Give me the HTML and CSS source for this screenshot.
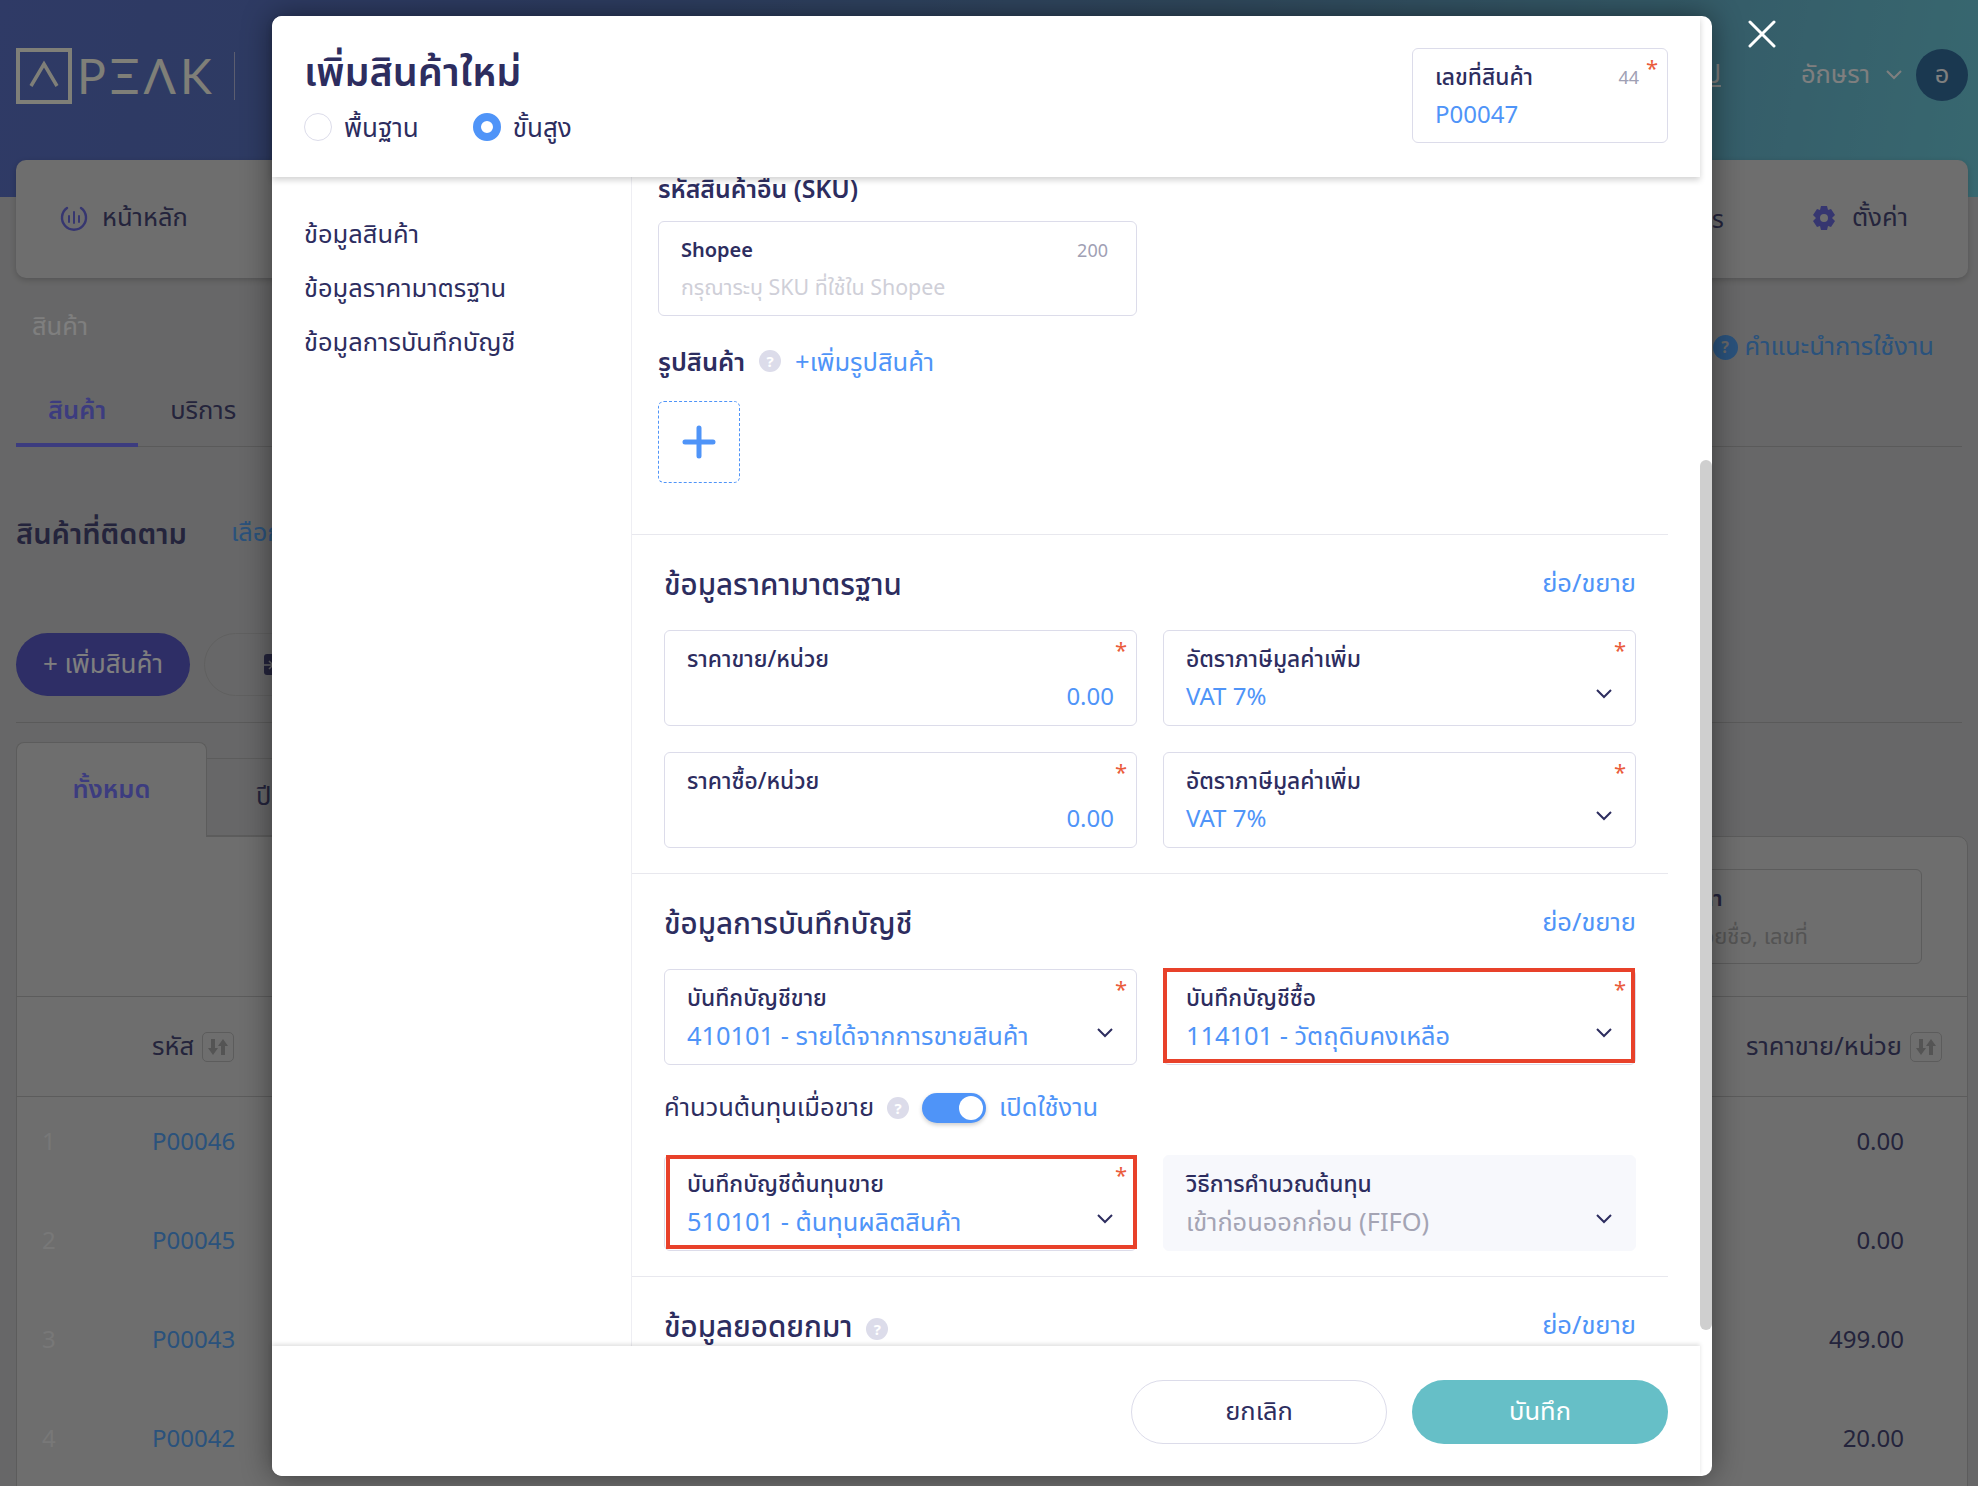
FILE: index.html
```html
<!DOCTYPE html>
<html lang="th">
<head>
    <meta charset="UTF-8">
    <title>PEAK - เพิ่มสินค้าใหม่</title>
    <link rel="stylesheet" href="styles.css">
</head>
<body>
    <!-- Page behind the dialog -->
    <div class="page">
        <header class="topbar">
            <div class="logo">
                <svg width="56" height="56" viewBox="0 0 56 56" fill="none" stroke="#fffff0" stroke-width="4"><rect x="2" y="2" width="52" height="52"/><path d="M15 38 L28 16 L41 38" stroke-width="3.5"/></svg>
                <span class="logo-text">PΞΛK</span>
                <span class="logo-line"></span>
            </div>
            <div class="topbar-right">
                <span class="top-link">ป</span>
                <span class="user-name">อักษรา</span>
                <svg class="user-caret" width="20" height="12" viewBox="0 0 20 12" fill="none" stroke="#fff" stroke-width="2"><path d="M3 2 L10 9 L17 2"/></svg>
                <span class="avatar">อ</span>
            </div>
        </header>

        <nav class="mainnav">
            <div class="nav-item">
                <svg width="28" height="28" viewBox="0 0 28 28" fill="none" stroke="#6c6ce0" stroke-width="2.4" stroke-linecap="round"><path d="M7 4 A12 12 0 1 0 21 4"/><path d="M9 12 V18 M14 8 V19 M19 12 V18" stroke-width="2"/></svg>
                <span>หน้าหลัก</span>
            </div>
            <div class="nav-right">
                <span class="nav-cut">Apps</span>
                <div class="nav-item">
                    <svg width="24" height="26" viewBox="0 0 24 26"><path fill="#6c6ce0" fill-rule="evenodd" d="M9 1h6l1 4 3-1 4 6-3 3 3 3-4 6-3-1-1 4H9l-1-4-3 1-4-6 3-3-3-3 4-6 3 1zM12 9a4 4 0 1 0 0 8 4 4 0 0 0 0-8z"/></svg>
                    <span>ตั้งค่า</span>
                </div>
            </div>
        </nav>

        <div class="crumbs">
            <span class="crumb">สินค้า</span>
            <span class="help-link"><i class="help-dot">?</i>คำแนะนำการใช้งาน</span>
        </div>

        <div class="subtabs">
            <span class="subtab active">สินค้า</span>
            <span class="subtab">บริการ</span>
        </div>

        <div class="follow">
            <h2>สินค้าที่ติดตาม</h2>
            <span class="follow-link">เลือก</span>
        </div>

        <div class="actions">
            <span class="btn-add">+ เพิ่มสินค้า</span>
            <span class="btn-ghost">
                <svg width="30" height="22" viewBox="0 0 30 22"><rect x="5" y="0" width="25" height="21" rx="3" fill="#484878"/><path d="M0 11 H14 M10 7 L14 11 L10 15" fill="none" stroke="#cfcfd0" stroke-width="1.5"/></svg>
            </span>
        </div>

        <div class="doc-tabs">
            <span class="doc-tab active">ทั้งหมด</span>
            <span class="doc-tab">ปี</span>
        </div>

        <section class="list-card">
            <div class="filter-row">
                <div class="filter-box">
                    <b>ค้นหา</b>
                    <span>ค้นหาด้วยชื่อ, เลขที่</span>
                </div>
            </div>
            <div class="row head">
                <span class="col-no"></span>
                <span class="col-code">รหัส <i class="sort"><svg width="24" height="18" viewBox="0 0 24 18" fill="#a8a8a8"><path d="M5 1h4v9h3l-5 7-5-7h3zM15 17h4V8h3l-5-7-5 7h3z"/></svg></i></span>
                <span class="col-price">ราคาขาย/หน่วย <i class="sort"><svg width="24" height="18" viewBox="0 0 24 18" fill="#a8a8a8"><path d="M5 1h4v9h3l-5 7-5-7h3zM15 17h4V8h3l-5-7-5 7h3z"/></svg></i></span>
            </div>
            <div class="row"><span class="col-no">1</span><span class="col-code link">P00046</span><span class="col-price num">0.00</span></div>
            <div class="row"><span class="col-no">2</span><span class="col-code link">P00045</span><span class="col-price num">0.00</span></div>
            <div class="row"><span class="col-no">3</span><span class="col-code link">P00043</span><span class="col-price num">499.00</span></div>
            <div class="row"><span class="col-no">4</span><span class="col-code link">P00042</span><span class="col-price num">20.00</span></div>
        </section>
    </div>

    <div class="overlay"></div>

    <!-- Add product dialog -->
    <div class="modal">
        <div class="modal-pane">
            <div class="modal-head">
                <div>
                    <h1>เพิ่มสินค้าใหม่</h1>
                    <div class="radios">
                        <label class="radio"><span class="radio-dot"></span>พื้นฐาน</label>
                        <label class="radio"><span class="radio-dot on"></span>ขั้นสูง</label>
                    </div>
                </div>
                <div class="field field-code">
                    <div class="field-top"><span class="field-label">เลขที่สินค้า</span><span class="count">44</span></div>
                    <div class="field-value">P00047</div>
                    <span class="star">*</span>
                </div>
            </div>

            <div class="modal-body">
                <aside class="side">
                    <a>ข้อมูลสินค้า</a>
                    <a>ข้อมูลราคามาตรฐาน</a>
                    <a>ข้อมูลการบันทึกบัญชี</a>
                </aside>

                <div class="content">
                    <div class="block-top">
                        <div class="sku-title">รหัสสินค้าอื่น (SKU)</div>
                        <div class="field field-sku">
                            <div class="field-top"><span class="field-label">Shopee</span><span class="count">200</span></div>
                            <div class="field-value placeholder">กรุณาระบุ SKU ที่ใช้ใน Shopee</div>
                        </div>
                        <div class="photo-row">
                            <span class="sub-title">รูปสินค้า</span>
                            <i class="q-dot">?</i>
                            <span class="text-link">+เพิ่มรูปสินค้า</span>
                        </div>
                        <div class="photo-box">
                            <svg width="34" height="34" viewBox="0 0 34 34" stroke="#4f94f8" stroke-width="5" stroke-linecap="round"><path d="M17 3 V31 M3 17 H31"/></svg>
                        </div>
                    </div>

                    <section class="block">
                        <div class="block-head">
                            <h3>ข้อมูลราคามาตรฐาน</h3>
                            <span class="text-link">ย่อ/ขยาย</span>
                        </div>
                        <div class="field-grid">
                            <div class="field">
                                <div class="field-label">ราคาขาย/หน่วย</div>
                                <div class="field-value right">0.00</div>
                                <span class="star">*</span>
                            </div>
                            <div class="field">
                                <div class="field-label">อัตราภาษีมูลค่าเพิ่ม</div>
                                <div class="field-value">VAT 7%</div>
                                <span class="star">*</span>
                                <svg class="caret" width="18" height="12" viewBox="0 0 18 12" fill="none" stroke="#2d2d5f" stroke-width="2"><path d="M2 2 L9 9 L16 2"/></svg>
                            </div>
                            <div class="field">
                                <div class="field-label">ราคาซื้อ/หน่วย</div>
                                <div class="field-value right">0.00</div>
                                <span class="star">*</span>
                            </div>
                            <div class="field">
                                <div class="field-label">อัตราภาษีมูลค่าเพิ่ม</div>
                                <div class="field-value">VAT 7%</div>
                                <span class="star">*</span>
                                <svg class="caret" width="18" height="12" viewBox="0 0 18 12" fill="none" stroke="#2d2d5f" stroke-width="2"><path d="M2 2 L9 9 L16 2"/></svg>
                            </div>
                        </div>
                    </section>

                    <section class="block">
                        <div class="block-head">
                            <h3>ข้อมูลการบันทึกบัญชี</h3>
                            <span class="text-link">ย่อ/ขยาย</span>
                        </div>
                        <div class="field-grid">
                            <div class="field">
                                <div class="field-label">บันทึกบัญชีขาย</div>
                                <div class="field-value account">410101 - รายได้จากการขายสินค้า</div>
                                <span class="star">*</span>
                                <svg class="caret" width="18" height="12" viewBox="0 0 18 12" fill="none" stroke="#2d2d5f" stroke-width="2"><path d="M2 2 L9 9 L16 2"/></svg>
                            </div>
                            <div class="field">
                                <div class="field-label">บันทึกบัญชีซื้อ</div>
                                <div class="field-value account">114101 - วัตถุดิบคงเหลือ</div>
                                <span class="star">*</span>
                                <svg class="caret" width="18" height="12" viewBox="0 0 18 12" fill="none" stroke="#2d2d5f" stroke-width="2"><path d="M2 2 L9 9 L16 2"/></svg>
                                <span class="mark"></span>
                            </div>
                        </div>
                        <div class="toggle-row">
                            <span>คำนวนต้นทุนเมื่อขาย</span>
                            <i class="q-dot">?</i>
                            <span class="toggle"><span class="knob"></span></span>
                            <span class="text-link">เปิดใช้งาน</span>
                        </div>
                        <div class="field-grid">
                            <div class="field">
                                <div class="field-label">บันทึกบัญชีต้นทุนขาย</div>
                                <div class="field-value account">510101 - ต้นทุนผลิตสินค้า</div>
                                <span class="star">*</span>
                                <svg class="caret" width="18" height="12" viewBox="0 0 18 12" fill="none" stroke="#2d2d5f" stroke-width="2"><path d="M2 2 L9 9 L16 2"/></svg>
                                <span class="mark mark-left"></span>
                            </div>
                            <div class="field disabled">
                                <div class="field-label">วิธีการคำนวณต้นทุน</div>
                                <div class="field-value account">เข้าก่อนออกก่อน (FIFO)</div>
                                <svg class="caret" width="18" height="12" viewBox="0 0 18 12" fill="none" stroke="#2d2d5f" stroke-width="2"><path d="M2 2 L9 9 L16 2"/></svg>
                            </div>
                        </div>
                    </section>

                    <section class="block">
                        <div class="block-head">
                            <h3>ข้อมูลยอดยกมา <i class="q-dot">?</i></h3>
                            <span class="text-link">ย่อ/ขยาย</span>
                        </div>
                    </section>
                </div>
            </div>

            <div class="modal-foot">
                <button class="btn btn-cancel">ยกเลิก</button>
                <button class="btn btn-save">บันทึก</button>
            </div>
        </div>
        <div class="scroll-thumb"></div>
    </div>

    <svg class="close" width="28" height="28" viewBox="0 0 28 28" stroke="#fff" stroke-width="3" stroke-linecap="round"><path d="M2 2 L26 26 M26 2 L2 26"/></svg>
</body>
</html>
```

FILE: styles.css
```css
/* General */
* {
    box-sizing: border-box;
}

html, body {
    margin: 0;
    padding: 0;
}

body {
    position: relative;
    width: 1978px;
    height: 1486px;
    overflow: hidden;
    font-family: "Noto Sans", "Noto Sans Thai", "DejaVu Sans", sans-serif;
    font-size: 25.5px;
    color: #2d2d5f;
}

i {
    font-style: normal;
}

/* Page behind the dialog */
.page {
    height: 1486px;
    overflow: hidden;
    background: #cfcfd0;
    color: #484878;
}

.topbar {
    height: 197px;
    padding: 48px 10px 0 16px;
    display: flex;
    justify-content: space-between;
    align-items: flex-start;
    background: linear-gradient(100deg, #5e74cc 0%, #5a78c0 30%, #6090b8 60%, #70d0e0 100%);
}

.logo {
    display: flex;
    align-items: center;
    gap: 5px;
    color: #fffff0;
}

.logo-text {
    font-family: "Lato", sans-serif;
    font-size: 48px;
    letter-spacing: 4px;
    line-height: 56px;
}

.logo-line {
    width: 1px;
    height: 48px;
    margin-left: 13px;
    background: #b8bce0;
}

.topbar-right {
    display: flex;
    align-items: center;
    height: 54px;
    color: #fff;
}

.top-link {
    margin-right: 80px;
    text-decoration: underline;
}

.user-name {
    margin-right: 14px;
}

.user-caret {
    margin-right: 12px;
}

.avatar {
    width: 52px;
    height: 52px;
    border-radius: 50%;
    display: flex;
    align-items: center;
    justify-content: center;
    background: #3470a0;
    color: #fff;
}

.mainnav {
    height: 118px;
    margin: -37px 10px 0 16px;
    padding: 0 60px 3px 44px;
    display: flex;
    justify-content: space-between;
    align-items: center;
    background: #dcdcdc;
    border-radius: 10px;
    box-shadow: 0 2px 6px rgba(0, 0, 0, 0.2);
}

.nav-item {
    display: flex;
    align-items: center;
    gap: 14px;
}

.nav-right {
    display: flex;
    align-items: center;
    gap: 88px;
}

.nav-right .nav-item {
    gap: 16px;
}

.crumbs {
    height: 82px;
    margin-top: 20px;
    padding: 0 44px 0 32px;
    display: flex;
    justify-content: space-between;
    align-items: flex-start;
    color: #fff;
}

.crumb {
    margin-top: 10px;
}

.help-link {
    margin-top: 30px;
    display: flex;
    align-items: center;
    gap: 7px;
    color: #54a4f8;
}

.help-dot {
    width: 25px;
    height: 25px;
    border-radius: 50%;
    display: flex;
    align-items: center;
    justify-content: center;
    background: #54a4f8;
    color: #cfcfd0;
    font-size: 16px;
    font-weight: 700;
}

.subtabs {
    height: 67px;
    margin: 0 16px;
    display: flex;
    border-bottom: 1px solid #b4b4b4;
}

.subtab {
    height: 67px;
    padding: 11px 32px 0;
    line-height: 36px;
}

.subtab.active {
    color: #7878ff;
    font-weight: 600;
    border-bottom: 4px solid #7878ff;
}

.follow {
    margin: 67px 16px 0;
    display: flex;
    align-items: center;
    gap: 44px;
}

.follow h2 {
    margin: 0;
    font-size: 29px;
    line-height: 36px;
    font-weight: 600;
}

.follow-link {
    color: #54a4f8;
}

.actions {
    height: 90px;
    margin: 81px 16px 0;
    padding-bottom: 26px;
    display: flex;
    gap: 14px;
    border-bottom: 1px solid #b4b4b4;
}

.btn-add {
    width: 174px;
    border-radius: 32px;
    display: flex;
    align-items: center;
    justify-content: center;
    background: #5c5ccc;
    color: #fff;
    font-size: 26px;
}

.btn-ghost {
    width: 200px;
    padding-left: 54px;
    display: flex;
    align-items: center;
    border: 1px solid #c0c0c0;
    border-radius: 32px;
}

.doc-tabs {
    height: 94px;
    margin: 19px 16px 0;
    display: flex;
    align-items: flex-end;
}

.doc-tab {
    height: 78px;
    padding: 18px 26px 0 49px;
    line-height: 36px;
    border: 1px solid #b8b8b8;
    border-left: 0;
}

.doc-tab.active {
    position: relative;
    width: 191px;
    height: 95px;
    margin-bottom: -1px;
    padding: 27px 0 0;
    text-align: center;
    color: #7878ff;
    font-weight: 600;
    background: #dcdcdc;
    border-left: 1px solid #b8b8b8;
    border-bottom: 0;
    border-radius: 8px 8px 0 0;
}

.list-card {
    min-height: 700px;
    margin: 0 10px 0 16px;
    background: #dcdcdc;
    border: 1px solid #b8b8b8;
    border-radius: 0 10px 0 0;
}

.filter-row {
    height: 160px;
    padding: 32px 45px 0 0;
    display: flex;
    justify-content: flex-end;
    border-bottom: 1px solid #b8b8b8;
}

.filter-box {
    width: 400px;
    height: 95px;
    padding: 12px 0 0 118px;
    display: flex;
    flex-direction: column;
    align-items: flex-start;
    font-size: 22px;
    border: 1px solid #b8b8b8;
    border-radius: 6px;
}

.filter-box b {
    padding-left: 31px;
    font-weight: 600;
}

.filter-box span {
    margin-top: 4px;
    color: #a8a8a8;
}

.row {
    height: 99px;
    padding-left: 25px;
    display: flex;
    align-items: center;
    font-size: 24px;
}

.row.head {
    height: 100px;
    margin-bottom: -6px;
    font-size: 25.5px;
    border-bottom: 1px solid #b8b8b8;
}

.col-no {
    width: 110px;
    color: #f0f0f0;
}

.col-code {
    display: flex;
    align-items: center;
    gap: 8px;
}

.col-price {
    margin-left: auto;
    display: flex;
    align-items: center;
    gap: 8px;
}

.num {
    margin-right: 63px;
}

.head .col-price {
    margin-right: 25px;
}

.link {
    color: #54a4f8;
}

.sort {
    width: 32px;
    height: 30px;
    display: flex;
    align-items: center;
    justify-content: center;
    border: 1px solid #b8b8b8;
    border-radius: 5px;
}

.overlay {
    position: absolute;
    z-index: 10;
    inset: 0;
    background: rgba(0, 0, 0, 0.5);
}

.close {
    position: absolute;
    z-index: 11;
    left: 1748px;
    top: 20px;
}

/* Dialog */
.modal {
    position: absolute;
    z-index: 11;
    left: 272px;
    top: 16px;
    width: 1440px;
    height: 1460px;
    background: #fff;
    border-radius: 10px;
    box-shadow: 0 0 30px rgba(0, 0, 0, 0.45);
}

.modal-pane {
    width: 1428px;
    height: 100%;
    display: flex;
    flex-direction: column;
}

.modal-head {
    position: relative;
    z-index: 2;
    height: 161px;
    flex: none;
    padding: 32px 32px 0;
    display: flex;
    justify-content: space-between;
    align-items: flex-start;
    background: #fff;
    border-radius: 10px 0 0 0;
    box-shadow: 0 3px 6px rgba(0, 0, 0, 0.18);
}

.modal-head h1 {
    margin: 0;
    font-size: 39.5px;
    line-height: 46px;
    font-weight: 600;
}

.radios {
    margin-top: 16px;
    display: flex;
    gap: 54px;
    font-size: 26px;
}

.radio {
    display: flex;
    align-items: center;
    gap: 12px;
    line-height: 34px;
}

.radio-dot {
    width: 28px;
    height: 28px;
    border: 1px solid #dcdcea;
    border-radius: 50%;
}

.radio-dot.on {
    border: 8px solid #4f94f8;
}

.modal-body {
    flex: 1;
    min-height: 0;
    display: flex;
    overflow: hidden;
}

.side {
    width: 360px;
    flex: none;
    padding: 39px 0 0 32px;
    display: flex;
    flex-direction: column;
    gap: 20px;
    line-height: 34px;
    border-right: 1px solid #eeeef3;
}

.content {
    width: 1036px;
}

.block-top {
    height: 357px;
    padding-left: 26px;
}

.sku-title {
    height: 22px;
    margin-bottom: 22px;
    font-size: 24.8px;
    line-height: 22px;
    font-weight: 600;
}

/* Form fields */
.field {
    position: relative;
    height: 96px;
    padding: 11px 22px 0;
    background: #fff;
    border: 1px solid #dcdcea;
    border-radius: 6px;
}

.field-code {
    width: 256px;
    height: 95px;
}

.field-sku {
    width: 479px;
    height: 95px;
}

.field-top {
    padding-right: 6px;
    display: flex;
    justify-content: space-between;
    align-items: center;
}

.field-label {
    font-size: 22.8px;
    line-height: 33px;
    font-weight: 500;
}

.field-sku .field-label {
    font-size: 20px;
    font-weight: 600;
}

.field-value {
    margin-top: 4px;
    font-size: 24px;
    line-height: 34px;
    color: #4f94f8;
    white-space: nowrap;
}

.field-value.right {
    text-align: right;
}

.field-value.account {
    font-size: 25.4px;
}

.field-value.placeholder {
    font-size: 21.4px;
    color: #cfcfd8;
}

.count {
    font-size: 18px;
    color: #a0a0b4;
}

.star {
    position: absolute;
    right: 9px;
    top: 5px;
    font-size: 22px;
    line-height: 26px;
    color: #ea5c3c;
}

.caret {
    position: absolute;
    right: 22px;
    top: 57px;
}

.field.disabled {
    background: #f7f8fc;
    border-color: #f7f8fc;
}

.field.disabled .field-value {
    color: #a4a4b4;
}

/* Red annotation boxes */
.mark {
    position: absolute;
    left: -1px;
    right: 0;
    top: -2px;
    bottom: 1px;
    border: 4px solid #e8412a;
}

.mark-left {
    left: 1px;
    right: -1px;
    top: -1px;
}

.photo-row {
    height: 30px;
    margin-top: 30px;
    display: flex;
    align-items: center;
    gap: 14px;
    line-height: 30px;
}

.sub-title {
    font-weight: 600;
}

.q-dot {
    width: 22px;
    height: 22px;
    border-radius: 50%;
    display: inline-flex;
    align-items: center;
    justify-content: center;
    background: #dcdcea;
    color: #fff;
    font-size: 15px;
    font-weight: 700;
    vertical-align: middle;
}

.block-head .q-dot {
    margin-left: 6px;
}

.text-link {
    color: #4f94f8;
}

.photo-box {
    width: 82px;
    height: 82px;
    margin-top: 25px;
    display: flex;
    align-items: center;
    justify-content: center;
    border: 1px dashed #4f94f8;
    border-radius: 6px;
}

.block {
    padding: 34px 32px 25px;
    border-top: 1px solid #e8e8ee;
}

.block-head {
    height: 30px;
    margin-bottom: 31px;
    display: flex;
    justify-content: space-between;
    align-items: center;
}

.block-head h3 {
    margin: 0;
    font-size: 29.5px;
    line-height: 30px;
    font-weight: 500;
}

.field-grid {
    display: grid;
    grid-template-columns: 473px 473px;
    gap: 26px;
}

.toggle-row {
    height: 30px;
    margin: 28px 0 32px;
    display: flex;
    align-items: center;
    gap: 13px;
}

.toggle {
    width: 64px;
    height: 30px;
    padding: 3px;
    display: flex;
    justify-content: flex-end;
    background: #4f94f8;
    border-radius: 15px;
    box-shadow: 0 2px 4px rgba(0, 0, 0, 0.2);
}

.knob {
    width: 24px;
    height: 24px;
    background: #fff;
    border-radius: 50%;
}

.modal-foot {
    position: relative;
    z-index: 2;
    height: 130px;
    flex: none;
    padding: 34px 32px 0 0;
    display: flex;
    justify-content: flex-end;
    gap: 25px;
    background: #fff;
    box-shadow: 0 -2px 4px rgba(0, 0, 0, 0.12);
    border-radius: 0 0 0 10px;
}

.btn {
    width: 256px;
    height: 64px;
    font-family: inherit;
    font-size: 25.5px;
    border-radius: 32px;
}

.btn-cancel {
    background: #fff;
    color: #2d2d5f;
    border: 1px solid #dcdcea;
}

.btn-save {
    background: #66bfc7;
    color: #fff;
    border: none;
}

.scroll-thumb {
    position: absolute;
    right: 0;
    top: 444px;
    width: 12px;
    height: 870px;
    background: #cfcfcf;
    border-radius: 6px;
}
```
